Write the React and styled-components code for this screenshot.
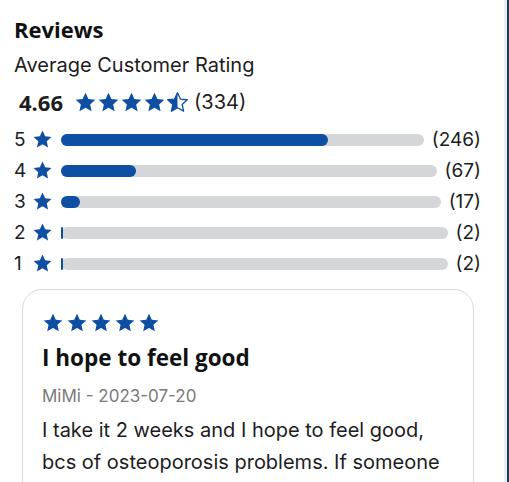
import React from "react";
import styled, { createGlobalStyle } from "styled-components";

const GlobalStyle = createGlobalStyle`
  html, body {
    margin: 0;
    padding: 0;
    background: #ffffff;
  }
  body {
    font-family: Inter, "Liberation Sans", sans-serif;
    color: #1c1c1e;
  }
`;

const BLUE = "#0e4ea3";
const STAR_PATH =
  "M12 1.8l3.05 6.6 7.15.75-5.35 4.85 1.5 7.05L12 17.45 5.65 21.05l1.5-7.05L1.8 9.15l7.15-.75z";

const ratings = [
  { stars: 5, count: 246 },
  { stars: 4, count: 67 },
  { stars: 3, count: 17 },
  { stars: 2, count: 2 },
  { stars: 1, count: 2 },
];
const total = 334;

const StarIcon = ({ size = 20, half = false }) => (
  <svg width={size} height={size} viewBox="0 0 24 24">
    {half && (
      <defs>
        <clipPath id="half-left">
          <rect x="0" y="0" width="12" height="24" />
        </clipPath>
      </defs>
    )}
    <path
      d={STAR_PATH}
      fill={half ? "none" : BLUE}
      stroke={BLUE}
      strokeWidth={half ? 1.4 : 0}
      strokeLinejoin="round"
    />
    {half && <path d={STAR_PATH} fill={BLUE} clipPath="url(#half-left)" />}
  </svg>
);

const App = () => {
  return (
    <Page>
      <GlobalStyle />
      <Title>Reviews</Title>
      <Subtitle>Average Customer Rating</Subtitle>
      <Summary>
        <Score>4.66</Score>
        <Stars $gap={0}>
          <StarIcon size={23} />
          <StarIcon size={23} />
          <StarIcon size={23} />
          <StarIcon size={23} />
          <StarIcon size={23} half />
        </Stars>
        <Count>(334)</Count>
      </Summary>

      <Breakdown>
        {ratings.map((r) => (
          <Row key={r.stars}>
            <RowLabel>{r.stars}</RowLabel>
            <StarIcon size={21} />
            <Track>
              <Fill style={{ width: `${(r.count / total) * 100}%` }} />
            </Track>
            <RowCount>({r.count})</RowCount>
          </Row>
        ))}
      </Breakdown>

      <ReviewCard>
        <Stars $gap={2}>
          {[0, 1, 2, 3, 4].map((i) => (
            <StarIcon key={i} size={22} />
          ))}
        </Stars>
        <ReviewTitle>I hope to feel good</ReviewTitle>
        <Meta>MiMi - 2023-07-20</Meta>
        <Body>
          I take it 2 weeks and I hope to feel good, bcs of osteoporosis
          problems. If someone has the same thing, tell me how it helped you.
        </Body>
      </ReviewCard>
    </Page>
  );
};

const Page = styled.div`
  height: 482px;
  overflow: hidden;
  box-sizing: border-box;
  padding: 15px 0 0 14px;
  border-right: 2px solid #1d3a5c;
  box-shadow: inset -3px 0 0 #e6eef6;
`;

const Title = styled.h2`
  margin: 0;
  font-family: "Open Sans", "Liberation Sans", sans-serif;
  font-weight: 700;
  font-size: 22px;
  line-height: 28px;
  color: #111;
`;

const Subtitle = styled.div`
  margin-top: 10px;
  font-size: 20px;
  line-height: 24px;
  color: #1c1c1e;
`;

const Summary = styled.div`
  display: flex;
  align-items: center;
  gap: 5px;
  margin: 12px 0 0 5px;
  height: 26px;
`;

const Score = styled.span`
  font-family: "Open Sans", "Liberation Sans", sans-serif;
  font-weight: 700;
  font-size: 22px;
  margin-right: 6px;
`;

const Stars = styled.div`
  display: flex;
  align-items: center;
  gap: ${({ $gap }) => $gap}px;
`;

const Count = styled.span`
  font-size: 20px;
`;

const Breakdown = styled.div`
  display: flex;
  flex-direction: column;
  gap: 10px;
  margin-top: 14px;
  width: 467px;
`;

const Row = styled.div`
  display: flex;
  align-items: center;
  height: 21px;
`;

const RowLabel = styled.span`
  width: 18px;
  font-size: 19px;
  line-height: 21px;
`;

const Track = styled.div`
  flex: 1;
  height: 12px;
  margin: 0 8px;
  border-radius: 6px;
  background: #d5d6d9;
`;

const Fill = styled.div`
  height: 100%;
  min-width: 2px;
  border-radius: 6px;
  background: ${BLUE};
`;

const RowCount = styled.span`
  font-size: 19px;
  line-height: 21px;
`;

const ReviewCard = styled.div`
  margin: 15px 0 0 8px;
  width: 452px;
  box-sizing: border-box;
  padding: 22px 19px 0 19px;
  border: 1px solid #d9d9d9;
  border-radius: 20px;
  min-height: 300px;
`;

const ReviewTitle = styled.div`
  margin-top: 9px;
  font-family: "Open Sans", "Liberation Sans", sans-serif;
  font-weight: 700;
  font-size: 22.5px;
  line-height: 30px;
  color: #111;
`;

const Meta = styled.div`
  margin-top: 12px;
  font-size: 17px;
  line-height: 22px;
  color: #7a7a7a;
`;

const Body = styled.p`
  margin: 7px 0 0;
  font-size: 20px;
  line-height: 32px;
  color: #1c1c1e;
`;

export default App;
